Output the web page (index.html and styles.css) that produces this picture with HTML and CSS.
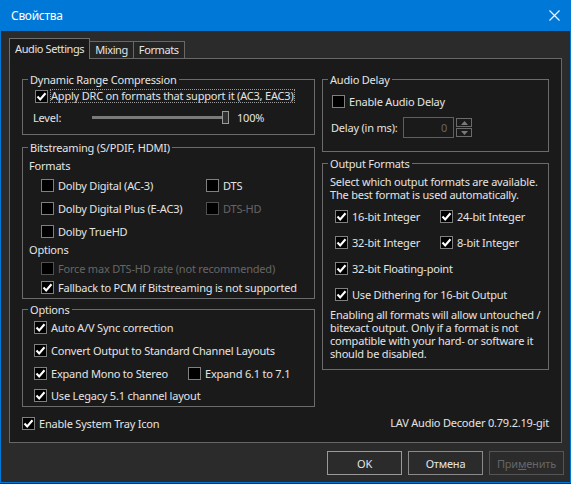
FILE: index.html
```html
<!DOCTYPE html>
<html>
<head>
  <title>Свойства</title>
  <link rel="stylesheet" href="styles.css">
</head>
<body>
  <div class="window">
    <div class="titlebar">
      <span>Свойства</span>
      <svg class="close" width="11" height="11" viewBox="0 0 11 11"><path d="M0.5 0.5L10.5 10.5M10.5 0.5L0.5 10.5" stroke="#fff" stroke-width="1.1"/></svg>
    </div>

    <div class="content">
      <div class="tabs">
        <div class="tab active">Audio Settings</div>
        <div class="tab">Mixing</div>
        <div class="tab">Formats</div>
      </div>

      <div class="panel">
        <div class="col left">
          <fieldset class="drc">
            <legend>Dynamic Range Compression</legend>
            <div class="row">
              <span class="box on"><svg viewBox="0 0 11 11"><path d="M1.5 5.5L4.2 8.4L9.5 2.2"/></svg></span>
              <span class="label focus">Apply DRC on formats that support it (AC3, EAC3)</span>
            </div>
            <div class="row level">
              <span class="level-label">Level:</span>
              <span class="slider"><span class="track"></span><span class="thumb"></span></span>
              <span class="pct">100%</span>
            </div>
          </fieldset>

          <fieldset class="bits">
            <legend>Bitstreaming (S/PDIF, HDMI)</legend>
            <div class="row sub">Formats</div>
            <div class="grid bits-grid">
              <div class="row"><span class="box"></span><span class="label">Dolby Digital (AC-3)</span></div>
              <div class="row"><span class="box"></span><span class="label">DTS</span></div>
              <div class="row"><span class="box"></span><span class="label">Dolby Digital Plus (E-AC3)</span></div>
              <div class="row disabled"><span class="box"></span><span class="label">DTS-HD</span></div>
              <div class="row"><span class="box"></span><span class="label">Dolby TrueHD</span></div>
            </div>
            <div class="row sub opt-label">Options</div>
            <div class="row indent disabled force"><span class="box"></span><span class="label">Force max DTS-HD rate (not recommended)</span></div>
            <div class="row indent force"><span class="box on"><svg viewBox="0 0 11 11"><path d="M1.5 5.5L4.2 8.4L9.5 2.2"/></svg></span><span class="label">Fallback to PCM if Bitstreaming is not supported</span></div>
          </fieldset>

          <fieldset class="opts">
            <legend>Options</legend>
            <div class="row"><span class="box on"><svg viewBox="0 0 11 11"><path d="M1.5 5.5L4.2 8.4L9.5 2.2"/></svg></span><span class="label">Auto A/V Sync correction</span></div>
            <div class="row"><span class="box on"><svg viewBox="0 0 11 11"><path d="M1.5 5.5L4.2 8.4L9.5 2.2"/></svg></span><span class="label">Convert Output to Standard Channel Layouts</span></div>
            <div class="grid opts-grid">
              <div class="row"><span class="box on"><svg viewBox="0 0 11 11"><path d="M1.5 5.5L4.2 8.4L9.5 2.2"/></svg></span><span class="label">Expand Mono to Stereo</span></div>
              <div class="row"><span class="box"></span><span class="label">Expand 6.1 to 7.1</span></div>
            </div>
            <div class="row last"><span class="box on"><svg viewBox="0 0 11 11"><path d="M1.5 5.5L4.2 8.4L9.5 2.2"/></svg></span><span class="label">Use Legacy 5.1 channel layout</span></div>
          </fieldset>

          <div class="row tray"><span class="box on"><svg viewBox="0 0 11 11"><path d="M1.5 5.5L4.2 8.4L9.5 2.2"/></svg></span><span class="label">Enable System Tray Icon</span></div>
        </div>

        <div class="col right">
          <fieldset class="delay">
            <legend>Audio Delay</legend>
            <div class="row"><span class="box"></span><span class="label">Enable Audio Delay</span></div>
            <div class="row delay-row">
              <span class="delay-label">Delay (in ms):</span>
              <span class="edit">0</span>
              <span class="spin">
                <span class="spin-btn"><svg width="7" height="4" viewBox="0 0 7 4"><path d="M0 4L3.5 0L7 4Z" fill="#7a7a7a"/></svg></span>
                <span class="spin-btn"><svg width="7" height="4" viewBox="0 0 7 4"><path d="M0 0L3.5 4L7 0Z" fill="#7a7a7a"/></svg></span>
              </span>
            </div>
          </fieldset>

          <fieldset class="out">
            <legend>Output Formats</legend>
            <p class="note top">Select which output formats are available.<br>The best format is used automatically.</p>
            <div class="grid out-grid">
              <div class="row"><span class="box on"><svg viewBox="0 0 11 11"><path d="M1.5 5.5L4.2 8.4L9.5 2.2"/></svg></span><span class="label">16-bit Integer</span></div>
              <div class="row"><span class="box on"><svg viewBox="0 0 11 11"><path d="M1.5 5.5L4.2 8.4L9.5 2.2"/></svg></span><span class="label">24-bit Integer</span></div>
              <div class="row"><span class="box on"><svg viewBox="0 0 11 11"><path d="M1.5 5.5L4.2 8.4L9.5 2.2"/></svg></span><span class="label">32-bit Integer</span></div>
              <div class="row"><span class="box on"><svg viewBox="0 0 11 11"><path d="M1.5 5.5L4.2 8.4L9.5 2.2"/></svg></span><span class="label">8-bit Integer</span></div>
              <div class="row wide"><span class="box on"><svg viewBox="0 0 11 11"><path d="M1.5 5.5L4.2 8.4L9.5 2.2"/></svg></span><span class="label">32-bit Floating-point</span></div>
              <div class="row wide"><span class="box on"><svg viewBox="0 0 11 11"><path d="M1.5 5.5L4.2 8.4L9.5 2.2"/></svg></span><span class="label">Use Dithering for 16-bit Output</span></div>
            </div>
            <p class="note bottom">Enabling all formats will allow untouched /<br>bitexact output. Only if a format is not<br>compatible with your hard- or software it<br>should be disabled.</p>
          </fieldset>

          <div class="version">LAV Audio Decoder 0.79.2.19-git</div>
        </div>
      </div>
    </div>

    <div class="buttons">
      <button class="btn default">OK</button>
      <button class="btn">Отмена</button>
      <button class="btn" disabled>При<u>м</u>енить</button>
    </div>
  </div>
</body>
</html>
```

FILE: styles.css
```css
body {
    margin: 0;
    background-color: #2b2b2b;
    font-family: "Noto Sans", sans-serif;
    font-size: 11px;
    letter-spacing: -0.2px;
    color: #e4e4e4;
}
.window {
    width: 569px;
    height: 482px;
    border: 1px solid #0078d7;
    border-top: none;
    background-color: #2b2b2b;
}
.titlebar {
    height: 31px;
    background-color: #0078d7;
    color: #fff;
    font-size: 12px;
    letter-spacing: -0.3px;
    display: flex;
    align-items: center;
    justify-content: space-between;
    padding: 0 10px 0 10px;
}
.close {
    display: block;
}
.content {
    padding: 7px 8px 0 8px;
}

/* tabs */
.tabs {
    display: flex;
    align-items: flex-end;
    height: 21px;
    margin-bottom: -1px;
    position: relative;
}
.tab {
    box-sizing: border-box;
    height: 17px;
    margin-bottom: 1px;
    line-height: 15px;
    padding: 0 5px;
    letter-spacing: -0.4px;
    border: 1px solid #686868;
    border-bottom: none;
    border-left: none;
    background-color: #242424;
}
.tab.active {
    height: 21px;
    margin-bottom: 0;
    padding: 2px 5px 0 5px;
    border-left: 1px solid #6e6e6e;
    border-color: #6e6e6e;
    background-color: #1a1a1a;
}
.panel {
    display: flex;
    gap: 7px;
    padding: 13px 12px 11px 12px;
    border: 1px solid #686868;
    background-color: #1a1a1a;
}
.col {
    display: flex;
    flex-direction: column;
}
.col.left {
    width: 293px;
}
.col.right {
    width: 227px;
}

/* group boxes */
fieldset {
    margin: 0;
    padding: 0;
    min-width: 0;
    border: 1px solid #6b6b6b;
}
legend {
    margin-left: 5px;
    padding: 0 2px;
    line-height: 15px;
}
.row {
    display: flex;
    align-items: center;
    height: 16px;
    white-space: nowrap;
}
.box {
    box-sizing: border-box;
    width: 13px;
    height: 13px;
    flex: none;
    border: 1px solid #808080;
    background-color: #000;
}
.box svg {
    display: block;
    width: 11px;
    height: 11px;
}
.box svg path {
    fill: none;
    stroke: #fff;
    stroke-width: 2.1;
}
.label {
    margin-left: 4px;
}
.disabled {
    color: #666;
}
.disabled .box {
    border-color: #505050;
}
.grid {
    display: grid;
    row-gap: 7px;
}

.drc {
    padding: 1px 0 9px 0;
}
.drc > .row {
    padding-left: 12px;
}
.drc .label {
    margin-left: 2px;
    padding: 0 1px;
    outline: 1px dotted #9a9a9a;
    outline-offset: -1px;
    line-height: 14px;
}
.drc > .level {
    margin-top: 5px;
    padding-left: 10px;
}
.level-label {
    width: 59px;
}
.slider {
    position: relative;
    width: 137px;
    height: 13px;
}
.track {
    position: absolute;
    left: 0;
    right: 6px;
    top: 5px;
    height: 3px;
    background-color: #7a7a7a;
}
.thumb {
    position: absolute;
    right: 0;
    top: 0;
    box-sizing: border-box;
    width: 7px;
    height: 13px;
    border: 1px solid #9a9a9a;
    background-color: #303030;
}
.pct {
    margin-left: 8px;
}

.bits {
    margin-top: 5px;
    padding: 2px 0 3px 0;
}
.sub {
    padding-left: 6px;
}
.bits-grid {
    grid-template-columns: 165px auto;
    margin-top: 4px;
    padding-left: 18px;
}
.opt-label {
    margin-top: 2px;
}
.indent {
    padding-left: 18px;
}
.force {
    margin-top: 3px;
}

.opts {
    margin-top: 3px;
    padding: 2px 0 3px 0;
}
.opts > .row,
.opts > .grid {
    padding-left: 11px;
}
.opts > .row + .row,
.opts > .row + .grid,
.opts > .grid + .row {
    margin-top: 7px;
}
.opts > .row.last {
    margin-top: 6px;
}
.opts-grid {
    grid-template-columns: 154px auto;
}
.tray {
    margin-top: 8px;
}

.delay {
    padding: 6px 0 13px 0;
}
.delay > .row {
    padding-left: 9px;
}
.delay > .delay-row {
    height: 21px;
    margin-top: 8px;
    padding-left: 8px;
}
.delay-label {
    width: 72px;
}
.edit {
    box-sizing: border-box;
    width: 51px;
    height: 21px;
    border: 1px solid #5f5f5f;
    color: #666;
    text-align: right;
    padding-right: 6px;
    line-height: 19px;
}
.spin {
    display: flex;
    flex-direction: column;
    gap: 1px;
    margin-left: 2px;
}
.spin-btn {
    box-sizing: border-box;
    width: 16px;
    height: 9px;
    border: 1px solid #6b6b6b;
    display: flex;
    align-items: center;
    justify-content: center;
}
.spin-btn svg {
    display: block;
}

.out {
    margin-top: 4px;
    padding: 0 0 9px 0;
}
.note {
    margin: 0;
    padding-left: 7px;
    line-height: 13px;
    white-space: nowrap;
}
.note.top {
    margin-top: 4px;
}
.note.bottom {
    margin-top: 6px;
}
.out-grid {
    grid-template-columns: 105px auto;
    row-gap: 10px;
    margin-top: 7px;
    padding-left: 12px;
}
.out-grid .wide {
    grid-column: 1 / 3;
}
.version {
    margin-top: auto;
    height: 16px;
    line-height: 16px;
    text-align: right;
}

/* dialog buttons */
.buttons {
    display: flex;
    justify-content: flex-end;
    gap: 6px;
    margin-top: 8px;
    padding-right: 6px;
}
.btn {
    width: 75px;
    height: 24px;
    padding: 0;
    font-family: "Noto Sans", sans-serif;
    font-size: 11px;
    letter-spacing: -0.2px;
    color: #e4e4e4;
    background-color: #2b2b2b;
    border: 1px solid #8a8a8a;
}
.btn.default {
    border-color: #9a9a9a;
}
.btn:disabled {
    color: #666;
    border-color: #555;
}
```
